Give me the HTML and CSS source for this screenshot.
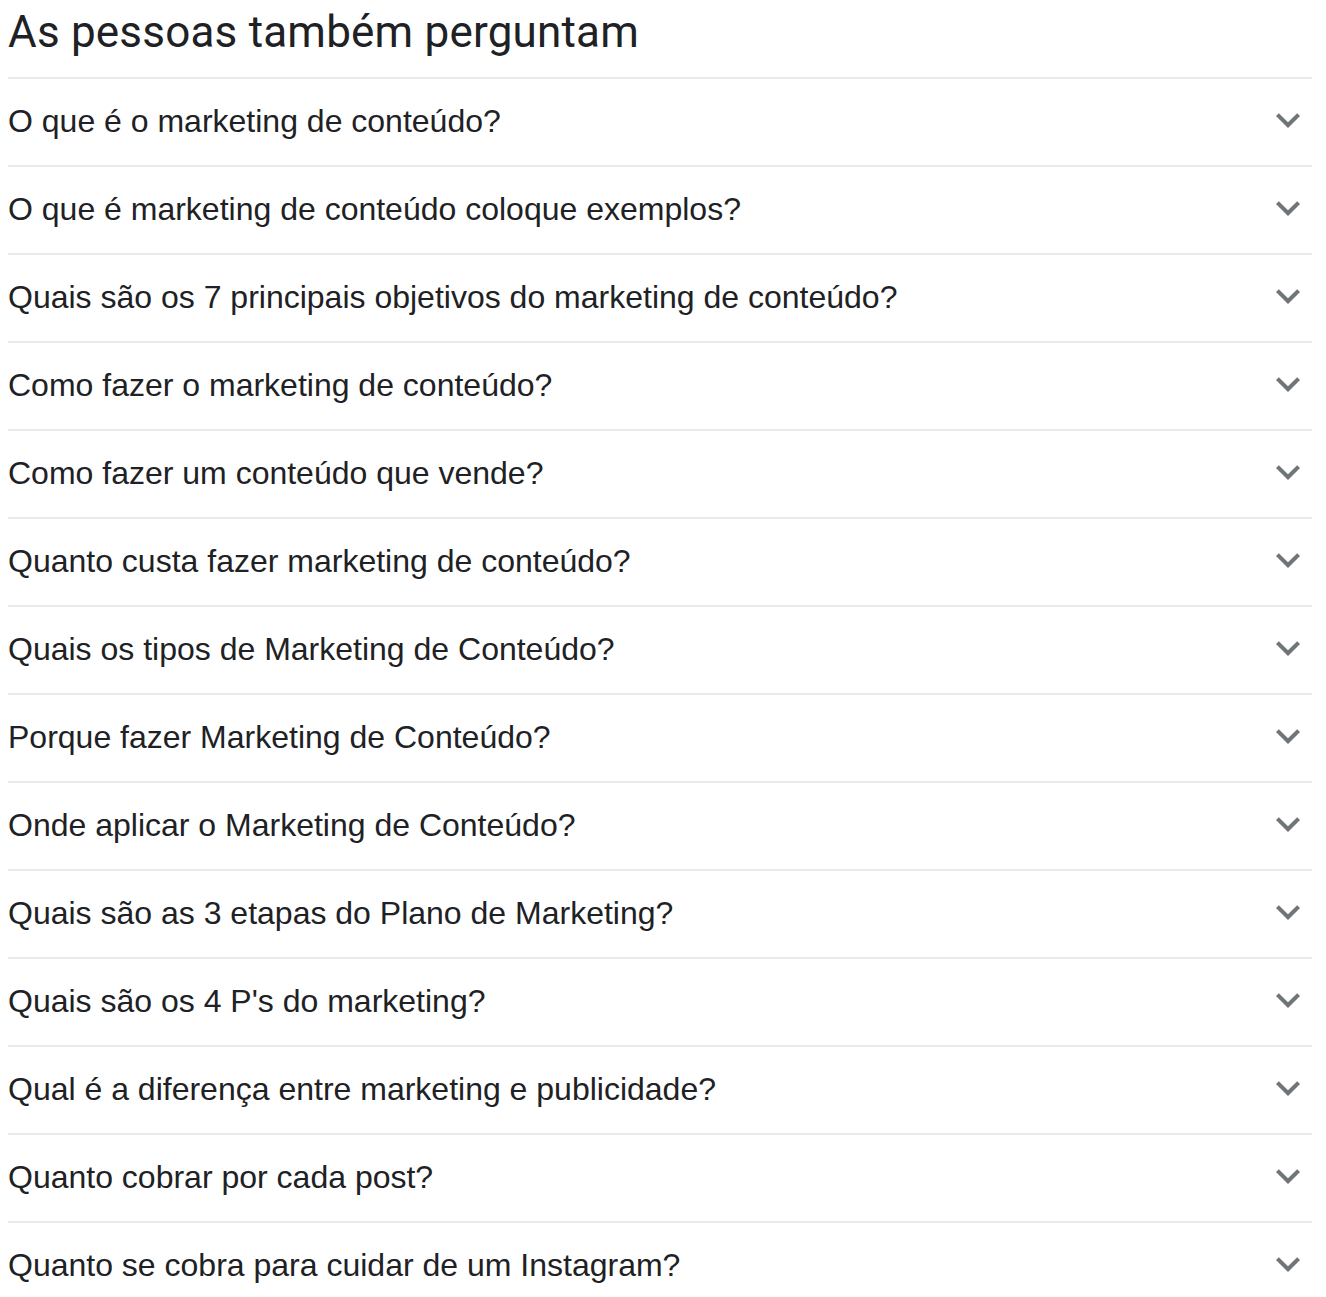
FILE: index.html
```html
<!DOCTYPE html>
<html lang="pt">
<head>
<meta charset="utf-8">
<link rel="stylesheet" href="styles.css">
</head>
<body>
<div class="paa">
  <h2 class="paa-title">As pessoas também perguntam</h2>
  <div class="paa-row"><span class="q">O que é o marketing de conteúdo?</span><svg class="chev" viewBox="6 8 12 8.5"><path d="M16.59 8.59L12 13.17 7.41 8.59 6 10l6 6 6-6z"/></svg></div>
  <div class="paa-row"><span class="q">O que é marketing de conteúdo coloque exemplos?</span><svg class="chev" viewBox="6 8 12 8.5"><path d="M16.59 8.59L12 13.17 7.41 8.59 6 10l6 6 6-6z"/></svg></div>
  <div class="paa-row"><span class="q">Quais são os 7 principais objetivos do marketing de conteúdo?</span><svg class="chev" viewBox="6 8 12 8.5"><path d="M16.59 8.59L12 13.17 7.41 8.59 6 10l6 6 6-6z"/></svg></div>
  <div class="paa-row"><span class="q">Como fazer o marketing de conteúdo?</span><svg class="chev" viewBox="6 8 12 8.5"><path d="M16.59 8.59L12 13.17 7.41 8.59 6 10l6 6 6-6z"/></svg></div>
  <div class="paa-row"><span class="q">Como fazer um conteúdo que vende?</span><svg class="chev" viewBox="6 8 12 8.5"><path d="M16.59 8.59L12 13.17 7.41 8.59 6 10l6 6 6-6z"/></svg></div>
  <div class="paa-row"><span class="q">Quanto custa fazer marketing de conteúdo?</span><svg class="chev" viewBox="6 8 12 8.5"><path d="M16.59 8.59L12 13.17 7.41 8.59 6 10l6 6 6-6z"/></svg></div>
  <div class="paa-row"><span class="q">Quais os tipos de Marketing de Conteúdo?</span><svg class="chev" viewBox="6 8 12 8.5"><path d="M16.59 8.59L12 13.17 7.41 8.59 6 10l6 6 6-6z"/></svg></div>
  <div class="paa-row"><span class="q">Porque fazer Marketing de Conteúdo?</span><svg class="chev" viewBox="6 8 12 8.5"><path d="M16.59 8.59L12 13.17 7.41 8.59 6 10l6 6 6-6z"/></svg></div>
  <div class="paa-row"><span class="q">Onde aplicar o Marketing de Conteúdo?</span><svg class="chev" viewBox="6 8 12 8.5"><path d="M16.59 8.59L12 13.17 7.41 8.59 6 10l6 6 6-6z"/></svg></div>
  <div class="paa-row"><span class="q">Quais são as 3 etapas do Plano de Marketing?</span><svg class="chev" viewBox="6 8 12 8.5"><path d="M16.59 8.59L12 13.17 7.41 8.59 6 10l6 6 6-6z"/></svg></div>
  <div class="paa-row"><span class="q">Quais são os 4 P's do marketing?</span><svg class="chev" viewBox="6 8 12 8.5"><path d="M16.59 8.59L12 13.17 7.41 8.59 6 10l6 6 6-6z"/></svg></div>
  <div class="paa-row"><span class="q">Qual é a diferença entre marketing e publicidade?</span><svg class="chev" viewBox="6 8 12 8.5"><path d="M16.59 8.59L12 13.17 7.41 8.59 6 10l6 6 6-6z"/></svg></div>
  <div class="paa-row"><span class="q">Quanto cobrar por cada post?</span><svg class="chev" viewBox="6 8 12 8.5"><path d="M16.59 8.59L12 13.17 7.41 8.59 6 10l6 6 6-6z"/></svg></div>
  <div class="paa-row"><span class="q">Quanto se cobra para cuidar de um Instagram?</span><svg class="chev" viewBox="6 8 12 8.5"><path d="M16.59 8.59L12 13.17 7.41 8.59 6 10l6 6 6-6z"/></svg></div>
</div>
</body>
</html>
```

FILE: styles.css
```css
html, body {
  margin: 0;
  padding: 0;
  background: #ffffff;
}

.paa {
  width: 1304px;
  margin-left: 8px;
  color: #202124;
}

.paa-title {
  margin: 0;
  padding-top: 4px;
  height: 77px;
  box-sizing: border-box;
  font-family: Roboto, "Open Sans", sans-serif;
  font-weight: 400;
  font-size: 44px;
  line-height: 56px;
  letter-spacing: 0.2px;
}

.paa-row {
  display: flex;
  align-items: center;
  justify-content: space-between;
  height: 88px;
  box-sizing: border-box;
  border-top: 2px solid #ebebeb;
  padding-bottom: 3px;
}

.q {
  font-family: "Liberation Sans", Arial, sans-serif;
  font-size: 32px;
  line-height: 36px;
}

.chev {
  width: 24px;
  height: 17px;
  margin-right: 12px;
  fill: #70757a;
}
```
